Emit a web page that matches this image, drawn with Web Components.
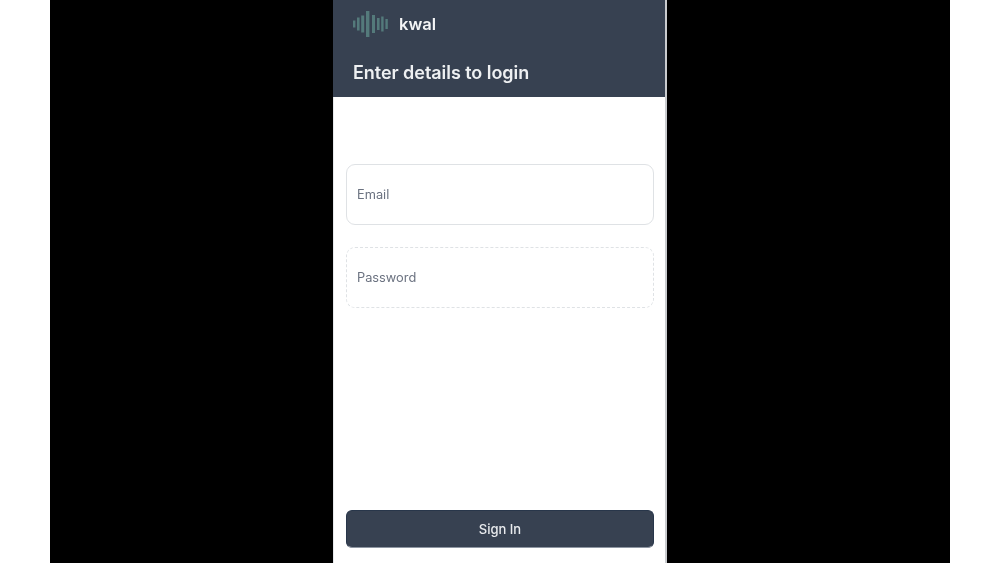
<!DOCTYPE html>
<html>
<head>
<meta charset="utf-8">
<title>kwal</title>
<style>
  html, body { margin: 0; height: 100%; background: #fff; overflow: hidden; }
  body { font-family: Inter, "Liberation Sans", sans-serif; }
</style>
</head>
<body>
<video-frame>
  <login-screen>
    <app-header slot="header" name="kwal" title="Enter details to login"></app-header>
    <text-field label="Email"></text-field>
    <text-field label="Password" dashed></text-field>
    <sign-button slot="footer">Sign In</sign-button>
  </login-screen>
</video-frame>

<script>
class VideoFrame extends HTMLElement {
  connectedCallback() {
    this.attachShadow({ mode: 'open' });
    this.shadowRoot.innerHTML = `
      <style>
        :host { display: flex; justify-content: center; width: 1000px; height: 563px; background: #fff; }
        .black { display: flex; justify-content: center; width: 900px; height: 100%; background: #000; }
      </style>
      <div class="black"><slot></slot></div>`;
  }
}

class LoginScreen extends HTMLElement {
  connectedCallback() {
    this.attachShadow({ mode: 'open' });
    this.shadowRoot.innerHTML = `
      <style>
        :host {
          display: flex; flex-direction: column; box-sizing: border-box;
          width: 334px; height: 563px; background: #fff;
          border-right: 2px solid #c9cbce;
          filter: blur(0.4px);
        }
        .form, .footer { box-shadow: inset 1px 0 #e6e8eb; }
        .form { display: flex; flex-direction: column; gap: 22px; padding: 67px 11px 0 13px; flex: 1; }
        .footer { padding: 0 11px 15px 13px; }
      </style>
      <slot name="header"></slot>
      <div class="form"><slot></slot></div>
      <div class="footer"><slot name="footer"></slot></div>`;
  }
}

class AppHeader extends HTMLElement {
  connectedCallback() {
    this.attachShadow({ mode: 'open' });
    // bars of the sound wave logo: [x, width, half height]
    const bars = [[1, 2.4, 3.5], [5, 2.6, 6.5], [9.2, 3, 8.5], [14, 3.4, 13.5],
                  [20, 3, 9], [25, 2.6, 6], [29.2, 2.4, 7.5], [33.4, 2.4, 5]];
    const wave = bars.map(([x, w, h]) =>
      `<rect x="${x}" y="${13 - h}" width="${w}" height="${h * 2}" fill="#547a7b"/>`).join('');
    this.shadowRoot.innerHTML = `
      <style>
        :host { display: block; height: 97px; box-sizing: border-box; background: #374151; padding: 0 20px; }
        .brand { display: flex; align-items: center; height: 47px; gap: 10px; margin-left: -1px; }
        svg { width: 37px; height: 26px; display: block; }
        .name { font-size: 16.5px; font-weight: 600; color: #f4f5f6; }
        .title { font-size: 18px; font-weight: 600; letter-spacing: -0.05px; line-height: 24px; margin-top: 14px; color: #eef0f2; white-space: nowrap; }
      </style>
      <div class="brand">
        <svg viewBox="0 0 37 26">${wave}</svg>
        <span class="name">${this.getAttribute('name')}</span>
      </div>
      <div class="title">${this.getAttribute('title')}</div>`;
  }
}

class TextField extends HTMLElement {
  connectedCallback() {
    this.attachShadow({ mode: 'open' });
    this.shadowRoot.innerHTML = `
      <style>
        :host { display: block; }
        .box {
          display: flex; align-items: center; box-sizing: border-box; height: 61px;
          padding: 0 10px 1px; border: 1px ${this.hasAttribute('dashed') ? 'dashed' : 'solid'} #dfe2e5; border-radius: 9px;
          font-size: 12.8px; color: #6b7280; background: #fff;
        }
      </style>
      <div class="box">${this.getAttribute('label')}</div>`;
  }
}

class SignButton extends HTMLElement {
  connectedCallback() {
    this.attachShadow({ mode: 'open' });
    this.shadowRoot.innerHTML = `
      <style>
        :host { display: block; }
        .btn {
          display: flex; align-items: center; justify-content: center; box-sizing: border-box;
          height: 38px; background: #374151; border: 1px solid #28364a; border-bottom-color: #8e96a2;
          border-radius: 6px; color: #e9ebee; font-size: 13px; font-weight: 500;
        }
      </style>
      <div class="btn"><slot></slot></div>`;
  }
}

customElements.define('video-frame', VideoFrame);
customElements.define('login-screen', LoginScreen);
customElements.define('app-header', AppHeader);
customElements.define('text-field', TextField);
customElements.define('sign-button', SignButton);
</script>
</body>
</html>
